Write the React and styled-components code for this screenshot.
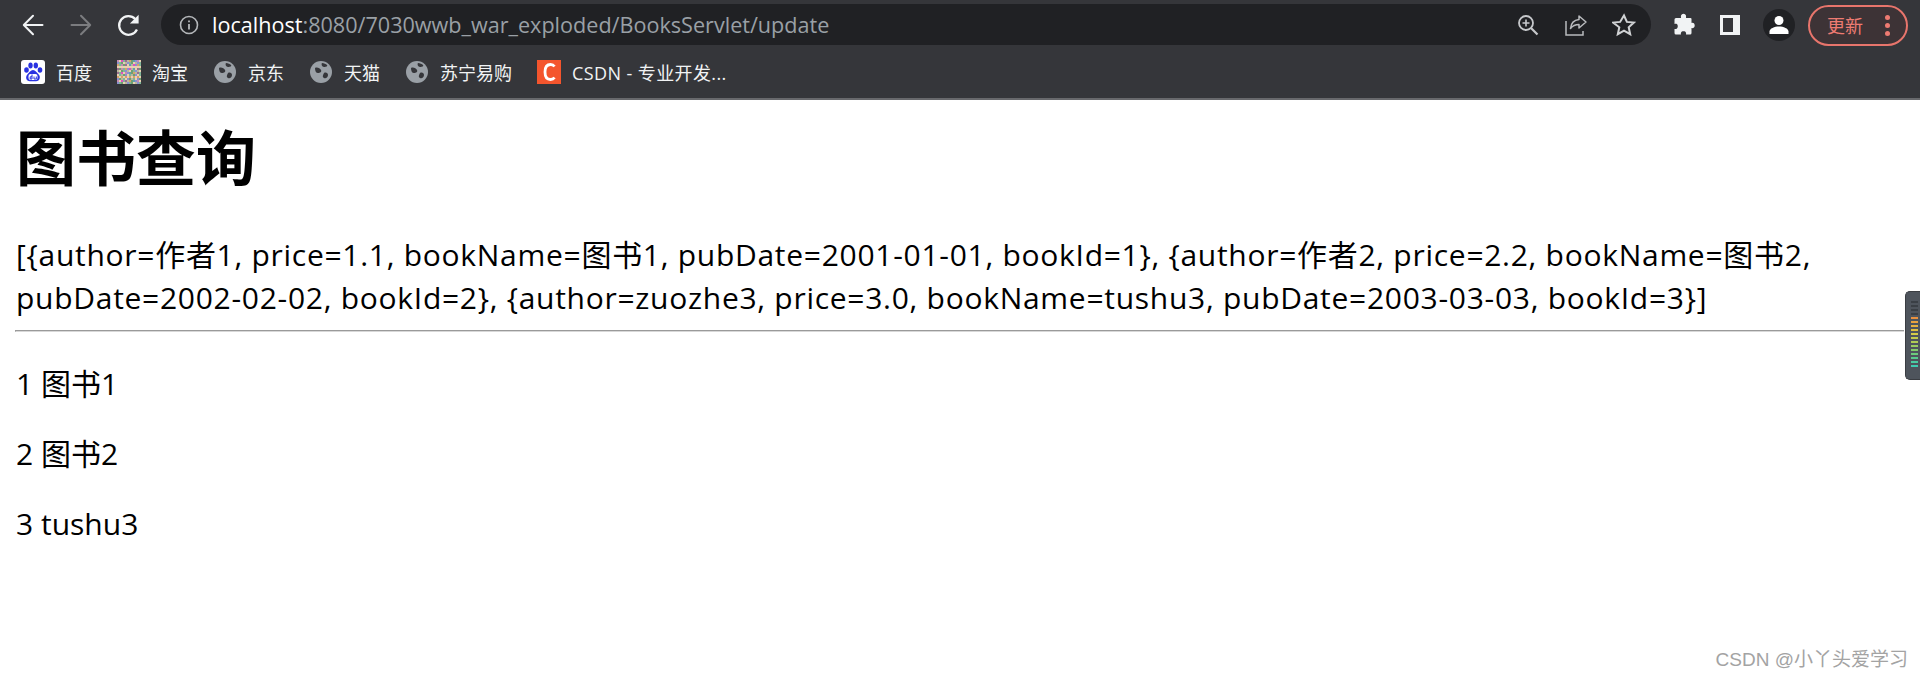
import React from 'react'
import styled, { createGlobalStyle } from 'styled-components'

const CJK = '"Noto Sans CJK SC", sans-serif'

const GlobalStyle = createGlobalStyle`
html, body {
  margin: 0;
  padding: 0;
  background: #fff;
  font-family: "Open Sans", ${CJK};
}
`
const Page = styled.div`
  position: relative;
  height: 678px;
  overflow: hidden;
`
const Chrome = styled.div`
  background: #35363a;
  border-bottom: 2px solid #68696c;
  height: 98px;
  box-sizing: content-box;
`
const Toolbar = styled.div`
  display: flex;
  align-items: center;
  height: 50px;
  padding: 0 12px 0 20px;
  box-sizing: border-box;
`
const NavBtn = styled.div`
  width: 26px;
  height: 26px;
  margin-right: ${p => p.$gap}px;
  display: flex;
  align-items: center;
  justify-content: center;
  svg {
    display: block;
    flex: none;
  }
`
const Omnibox = styled.div`
  flex: none;
  width: 1490px;
  height: 41px;
  margin-top: -1px;
  background: #202124;
  border-radius: 21px;
  display: flex;
  align-items: center;
  padding: 0 15px 0 18px;
  box-sizing: border-box;
`
const Url = styled.div`
  flex: 1;
  margin-left: 13px;
  font-size: 21.6px;
  color: #9aa0a6;
  white-space: nowrap;
  b {
    font-weight: 400;
    color: #fff;
  }
`
const OmniIcons = styled.div`
  display: flex;
  align-items: center;
  gap: 24px;
`
const ExtIcons = styled.div`
  display: flex;
  align-items: center;
  margin-left: 20px;
  gap: 23px;
`
const Avatar = styled.div`
  width: 32px;
  height: 32px;
  border-radius: 50%;
  background: #202124;
  display: flex;
  align-items: center;
  justify-content: center;
  margin-left: -2px;
`
const UpdatePill = styled.div`
  flex: none;
  margin-left: 13px;
  width: 100px;
  height: 41px;
  border: 2px solid #e8756c;
  border-radius: 21px;
  box-sizing: border-box;
  background: #3d3336;
  color: #ee7b72;
  font-size: 18px;
  font-family: ${CJK};
  display: flex;
  align-items: center;
  padding: 0 16px 0 17px;
  justify-content: space-between;
`
const Dots = styled.div`
  display: flex;
  flex-direction: column;
  gap: 3px;
  i {
    display: block;
    width: 5px;
    height: 5px;
    border-radius: 50%;
    background: #ee7b72;
  }
`
const BookmarkBar = styled.div`
  display: flex;
  align-items: center;
  gap: 25px;
  height: 44px;
  padding-left: 21px;
`
const Bookmark = styled.div`
  display: flex;
  align-items: center;
  gap: 11px;
  font-size: 18px;
  letter-spacing: ${p => (p.$spaced ? '0.4px' : '0')};
  color: #f1f3f4;
  white-space: nowrap;
  svg {
    display: block;
    flex: none;
  }
`
const Content = styled.div`
  padding: 0 16px;
  color: #000;
`
const Title = styled.h1`
  font-size: 60px;
  font-weight: 700;
  line-height: 80px;
  margin: 18px 0 35px;
`
const Dump = styled.div`
  font-size: 30px;
  letter-spacing: 0.720px;
  line-height: 43px;
  margin: 0 0 11px;
`
const Rule = styled.hr`
  margin: 0 0 0 -1px;
  border: 0;
  border-top: 1px solid #9a9a9a;
  border-left: 1px solid #9a9a9a;
  border-bottom: 1px solid #d8d8d8;
  height: 0;
`
const Row = styled.p`
  font-size: 30px;
  line-height: 43px;
  margin: 27px 0;
  &:first-of-type {
    margin-top: 30px;
  }
`
const SideWidget = styled.div`
  position: absolute;
  top: 291px;
  right: 0;
  width: 15px;
  height: 89px;
  background: #4e545c;
  border-radius: 5px 0 0 5px;
  border: 1px solid #3a3d42;
  border-right: 0;
  box-sizing: border-box;
  display: flex;
  flex-direction: column;
  align-items: flex-start;
  gap: 2px;
  padding: 9px 0 0 5px;
`
const Meter = styled.i`
  display: block;
  width: 7px;
  height: 2px;
  background: ${p => p.$c};
`
const Watermark = styled.div`
  position: absolute;
  right: 12px;
  top: 649px;
  font-size: 19px;
  line-height: 22px;
  color: #a3a3a3;
  font-family: "Liberation Sans", ${CJK};
  white-space: nowrap;
`

const stroke = { fill: 'none', strokeLinecap: 'round', strokeLinejoin: 'round' }

const Arrow = ({ color, flip }) => (
  <svg width="24" height="24" viewBox="0 0 24 24" style={flip ? { transform: 'scaleX(-1)' } : undefined}>
    <path d="M21.500 12H3.500M12 2.800 2.800 12l9.200 9.200" stroke={color} strokeWidth="2" {...stroke} />
  </svg>
)

const Reload = () => (
  <svg width="27" height="27" viewBox="0 0 24 24">
    <path d="M19.500 15.500A8.300 8.300 0 1 1 18 6.200" stroke="#f1f3f4" strokeWidth="2" fill="none" />
    <path d="M21 2.500v7.800h-7.800z" fill="#f1f3f4" />
  </svg>
)

const Info = () => (
  <svg width="20" height="20" viewBox="0 0 20 20">
    <circle cx="10" cy="10" r="8.500" stroke="#b4b7ba" strokeWidth="1.600" fill="none" />
    <path d="M10 9v5.500M10 5.500v1.800" stroke="#b4b7ba" strokeWidth="1.800" />
  </svg>
)

const Zoom = () => (
  <svg width="24" height="24" viewBox="0 0 24 24">
    <circle cx="10" cy="10" r="7" stroke="#c6c8cb" strokeWidth="1.800" fill="none" />
    <path d="M15 15l6.500 6.500" stroke="#c6c8cb" strokeWidth="2.200" />
    <path d="M10 6.500v7M6.500 10h7" stroke="#c6c8cb" strokeWidth="1.600" />
  </svg>
)

const Share = () => (
  <svg width="24" height="24" viewBox="0 0 24 24">
    <path d="M2 8v14h17v-4" stroke="#b8babd" strokeWidth="1.500" fill="none" />
    <path d="M15 3l7 6-7 6v-3.500c-4 0-6.500 1.300-8.500 4 .5-5 3-8.500 8.500-9z" stroke="#b8babd" strokeWidth="1.500" fill="none" strokeLinejoin="round" />
  </svg>
)

const Star = () => (
  <svg width="24" height="24" viewBox="0 0 24 24">
    <path d="M12 2.500l2.900 6.400 7 .7-5.200 4.700 1.500 6.900-6.200-3.600-6.200 3.600 1.500-6.900L1.100 9.600l7-.7z" stroke="#d0d2d4" strokeWidth="2" fill="none" strokeLinejoin="miter" />
  </svg>
)

const Puzzle = () => (
  <svg width="24" height="24" viewBox="0 0 24 24">
    <path d="M10 2.500a2.700 2.700 0 0 1 5 0c.2.800 0 1.500 0 2.500h4.500a1 1 0 0 1 1 1v4c1-.4 3.200-.2 3.200 2.500s-2.200 2.900-3.200 2.500v5a1.500 1.500 0 0 1-1.500 1.500h-4c.3-1.200.2-3.300-2.500-3.300s-2.800 2.100-2.500 3.300H5a1.500 1.500 0 0 1-1.500-1.500v-4c1.200.4 3.300-.1 3.300-2.700S4.700 10.600 3.500 11V6.500A1.500 1.500 0 0 1 5 5h5c0-1 -.2-1.700 0-2.500z" fill="#f1f3f4" />
  </svg>
)

const SidePanel = () => (
  <svg width="24" height="24" viewBox="0 0 24 24">
    <path d="M2 2h20v20H2zM5 5v14h10V5z" fill="#f1f3f4" fillRule="evenodd" />
  </svg>
)

const Person = () => (
  <svg width="22" height="22" viewBox="0 0 22 22">
    <circle cx="11" cy="6.500" r="4.500" fill="#fff" />
    <path d="M1.500 20v-2.500c0-3 5-5 9.500-5s9.500 2 9.500 5V20z" fill="#fff" />
  </svg>
)

const Baidu = () => (
  <svg width="24" height="24" viewBox="0 0 24 24">
    <rect width="24" height="24" rx="3" fill="#fff" />
    <g fill="#2932e1">
      <ellipse cx="5.500" cy="10" rx="2.300" ry="2.800" />
      <ellipse cx="9.500" cy="5.500" rx="2.200" ry="3" />
      <ellipse cx="14.800" cy="5.500" rx="2.200" ry="3" />
      <ellipse cx="19" cy="10" rx="2.300" ry="2.800" />
      <path d="M12 10c2.500 0 3.500 2.500 5.500 4.200 2.500 2.300 1.500 7-2.500 7h-6c-4 0-5-4.500-2.500-7C8.500 12.500 9.500 10 12 10z" />
    </g>
    <rect x="7.500" y="14" width="9" height="6" rx="2" fill="#fff" />
    <path d="M11 14.500v4.500H9.200v-2.200H11M13 16.500v2.500h2.300v-2.500" stroke="#2932e1" strokeWidth="1" fill="none" />
  </svg>
)

const NOISE = ['#c48bb5', '#7fb59a', '#d6a06a', '#8c8fd0', '#e04fc0', '#b8b8a0', '#5f9fb0', '#e8d0b0', '#9a6f8f', '#70a070']

const Taobao = () => {
  const cells = []
  for (let y = 0; y < 12; y++) {
    for (let x = 0; x < 12; x++) {
      const c = NOISE[(x * 7 + y * y * 3 + x * y) % NOISE.length]
      cells.push(<rect key={x + '-' + y} x={x * 2} y={y * 2} width="2" height="2" fill={c} />)
    }
  }
  return <svg width="24" height="24" viewBox="0 0 24 24">{cells}</svg>
}

const Globe = () => (
  <svg width="24" height="24" viewBox="0 0 24 24">
    <circle cx="12" cy="12" r="11" fill="#9aa0a6" />
    <path d="M6 8c2-1 5 0 6 2s-1 3-3 3-3-2-3-5zM15 13c2-1 4 0 4 2s-2 4-4 3-1-3 0-5zM13 3c2 0 4 1 5 2s-1 2-3 2-3-3-2-4z" fill="#35363a" />
  </svg>
)

const Csdn = () => (
  <svg width="24" height="24" viewBox="0 0 24 24">
    <rect width="24" height="24" fill="#f4552d" />
    <path d="M17.500 6.500C16.500 5 15 4.500 13.500 4.500 10 4.500 8 7.500 8 12s2 7.500 5.500 7.500c1.500 0 3-.5 4-2" stroke="#fff" strokeWidth="2.800" fill="none" />
  </svg>
)

const METER = ['#3a3f45', '#3a3f45', '#3a3f45', '#3a3f45', '#e8913f', '#e8a33f', '#e6b23f', '#e0c040', '#d6cc48', '#c4cc4c', '#b0cc55', '#9acc60', '#84cc6c', '#6ccc7c', '#58cc8c', '#4accA0', '#40ccb0']

const bookmarks = [
  { icon: <Baidu />, label: '百度' },
  { icon: <Taobao />, label: '淘宝' },
  { icon: <Globe />, label: '京东' },
  { icon: <Globe />, label: '天猫' },
  { icon: <Globe />, label: '苏宁易购' },
  { icon: <Csdn />, label: 'CSDN - 专业开发...', spaced: true },
]

const dump = '[{author=作者1, price=1.1, bookName=图书1, pubDate=2001-01-01, bookId=1}, {author=作者2, price=2.2, bookName=图书2, pubDate=2002-02-02, bookId=2}, {author=zuozhe3, price=3.0, bookName=tushu3, pubDate=2003-03-03, bookId=3}]'

const App = () => {
  return (
    <Page>
      <GlobalStyle />
      <Chrome>
        <Toolbar>
          <NavBtn $gap={23}><Arrow color="#f1f3f4" /></NavBtn>
          <NavBtn $gap={21}><Arrow color="#7b7c7f" flip /></NavBtn>
          <NavBtn $gap={20}><Reload /></NavBtn>
          <Omnibox>
            <Info />
            <Url><b>localhost</b>:8080/7030wwb_war_exploded/BooksServlet/update</Url>
            <OmniIcons>
              <Zoom />
              <Share />
              <Star />
            </OmniIcons>
          </Omnibox>
          <ExtIcons>
            <Puzzle />
            <SidePanel />
            <Avatar><Person /></Avatar>
          </ExtIcons>
          <UpdatePill>
            更新
            <Dots><i /><i /><i /></Dots>
          </UpdatePill>
        </Toolbar>
        <BookmarkBar>
          {bookmarks.map(b => (
            <Bookmark key={b.label} $spaced={b.spaced}>{b.icon}{b.label}</Bookmark>
          ))}
        </BookmarkBar>
      </Chrome>
      <Content>
        <Title>图书查询</Title>
        <Dump>{dump}</Dump>
        <Rule />
        <Row>1 图书1</Row>
        <Row>2 图书2</Row>
        <Row>3 tushu3</Row>
      </Content>
      <SideWidget>
        {METER.map((c, i) => <Meter key={i} $c={c} />)}
      </SideWidget>
      <Watermark>CSDN @小丫头爱学习</Watermark>
    </Page>
  )
}

export default App
